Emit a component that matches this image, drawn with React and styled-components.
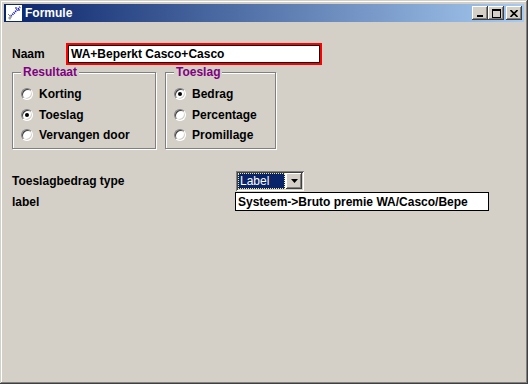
import styled, { createGlobalStyle } from "styled-components";

const Global = createGlobalStyle`
  body {
    margin: 0;
    background: #d4d0c8;
    font-family: "Liberation Sans", Arial, sans-serif;
  }
`;

const Window = styled.div`
  width: 528px;
  height: 384px;
  box-sizing: border-box;
  padding: 4px;
  background: #d4d0c8;
  box-shadow: inset -1px -1px #404040, inset 1px 1px #d4d0c8,
    inset -2px -2px #808080, inset 2px 2px #ffffff;
  display: flex;
  flex-direction: column;
`;

const TitleBar = styled.div`
  height: 18px;
  display: flex;
  align-items: center;
  padding: 0 2px;
  background: linear-gradient(to right, #0a246a, #a6caf0);
`;

const Title = styled.span`
  color: #fff;
  font-weight: bold;
  font-size: 12px;
  margin-left: 3px;
`;

const Buttons = styled.div`
  margin-left: auto;
  display: flex;
  gap: 2px;
`;

const Pair = styled.div`
  display: flex;
`;

const CapButton = styled.div`
  width: 16px;
  height: 14px;
  box-sizing: border-box;
  background: #d4d0c8;
  box-shadow: inset -1px -1px #404040, inset 1px 1px #ffffff,
    inset -2px -2px #808080;
  display: flex;
  align-items: center;
  justify-content: center;
`;

const Body = styled.div`
  padding: 21px 8px 0;
  display: flex;
  flex-direction: column;
`;

const Label = styled.span`
  font-size: 12px;
  font-weight: bold;
  color: #000;
`;

const NameRow = styled.div`
  display: flex;
  align-items: center;
  height: 22px;
`;

const NameLabel = styled(Label)`
  width: 54px;
`;

const NameInput = styled.div`
  width: 256px;
  height: 22px;
  box-sizing: border-box;
  border: 2px solid #ff0000;
  box-shadow: inset 1px 1px #000, inset -1px -1px #000;
  background: #fff;
  padding: 0 3px;
  display: flex;
  align-items: center;
  font-size: 12px;
  font-weight: bold;
`;

const Groups = styled.div`
  display: flex;
  gap: 9px;
  margin-top: 7px;
`;

const Group = styled.div`
  position: relative;
  width: ${(p) => p.$w}px;
  height: 77px;
  box-sizing: border-box;
  border: 1px solid #808080;
  box-shadow: inset 1px 1px #ffffff, 1px 1px #ffffff;
  padding: 11px 0 0 8px;
  display: flex;
  flex-direction: column;
`;

const Legend = styled.span`
  position: absolute;
  top: -8px;
  left: 8px;
  padding: 0 2px;
  background: #d4d0c8;
  color: #800080;
  font-size: 12px;
  font-weight: bold;
`;

const RadioRow = styled.div`
  height: 20.5px;
  display: flex;
  align-items: center;
  gap: 6px;
`;

const RadioDot = styled.span`
  width: 12px;
  height: 12px;
  box-sizing: border-box;
  border-radius: 50%;
  border: 1px solid;
  border-color: #808080 #ffffff #ffffff #808080;
  background: #fff;
  box-shadow: inset 1px 1px #404040, inset -1px -1px #d4d0c8;
  display: flex;
  align-items: center;
  justify-content: center;
  &::after {
    content: "";
    width: 4px;
    height: 4px;
    border-radius: 50%;
    background: ${(p) => (p.$on ? "#000" : "transparent")};
  }
`;

const Fields = styled.div`
  margin-top: 22px;
  display: grid;
  grid-template-columns: 224px auto;
  row-gap: 1px;
  align-items: center;
`;

const Combo = styled.div`
  width: 68px;
  height: 20px;
  box-sizing: border-box;
  padding: 2px;
  background: #fff;
  box-shadow: inset 1px 1px #808080, inset -1px -1px #ffffff,
    inset 2px 2px #404040, inset -2px -2px #d4d0c8;
  display: flex;
  gap: 1px;
`;

const ComboValue = styled.div`
  flex: 1;
  background: #0a246a;
  color: #fff;
  font-size: 12px;
  outline: 1px dotted #f0f080;
  outline-offset: -1px;
  padding-left: 2px;
  display: flex;
  align-items: center;
`;

const ComboButton = styled(CapButton)`
  height: 16px;
`;

const TextBox = styled.div`
  width: 254px;
  height: 19px;
  margin-left: -1px;
  box-sizing: border-box;
  border: 1px solid #000;
  background: #fff;
  padding: 0 2px;
  overflow: hidden;
  white-space: nowrap;
  font-size: 12px;
  font-weight: bold;
  display: flex;
  align-items: center;
`;

function AppIcon() {
  return (
    <svg width="16" height="16" viewBox="0 0 16 16">
      <rect x="0" y="0" width="16" height="16" fill="#fff" />
      <path d="M5 11 L14 2" stroke="#0000c0" strokeWidth="2" strokeDasharray="1 1" />
      <path d="M9 3 h2 M12 5 h2" stroke="#0000c0" strokeWidth="1" />
      <path d="M2 13 L5 10 L6 12 L4 15 Z" fill="#a0a0a0" />
      <path d="M2 9 L4 11" stroke="#808080" />
    </svg>
  );
}

function Radio({ on, children }) {
  return (
    <RadioRow>
      <RadioDot $on={on} />
      <Label>{children}</Label>
    </RadioRow>
  );
}

export default function App() {
  return (
    <>
      <Global />
      <Window>
        <TitleBar>
          <AppIcon />
          <Title>Formule</Title>
          <Buttons>
            <Pair>
              <CapButton>
                <svg width="8" height="8" viewBox="0 0 8 8">
                  <rect x="1" y="6" width="6" height="2" fill="#000" />
                </svg>
              </CapButton>
              <CapButton>
                <svg width="9" height="9" viewBox="0 0 9 9">
                  <rect x="0.5" y="0.5" width="8" height="8" fill="none" stroke="#000" />
                  <rect x="0" y="0" width="9" height="2" fill="#000" />
                </svg>
              </CapButton>
            </Pair>
            <CapButton>
              <svg width="8" height="7" viewBox="0 0 8 7">
                <path d="M0.5 0 L7.5 7 M7.5 0 L0.5 7" stroke="#000" strokeWidth="1.6" />
              </svg>
            </CapButton>
          </Buttons>
        </TitleBar>
        <Body>
          <NameRow>
            <NameLabel>Naam</NameLabel>
            <NameInput>WA+Beperkt Casco+Casco</NameInput>
          </NameRow>
          <Groups>
            <Group $w={144}>
              <Legend>Resultaat</Legend>
              <Radio>Korting</Radio>
              <Radio on>Toeslag</Radio>
              <Radio>Vervangen door</Radio>
            </Group>
            <Group $w={111}>
              <Legend>Toeslag</Legend>
              <Radio on>Bedrag</Radio>
              <Radio>Percentage</Radio>
              <Radio>Promillage</Radio>
            </Group>
          </Groups>
          <Fields>
            <Label>Toeslagbedrag type</Label>
            <Combo>
              <ComboValue>Label</ComboValue>
              <ComboButton>
                <svg width="7" height="4" viewBox="0 0 7 4">
                  <path d="M0 0 H7 L3.5 4 Z" fill="#000" />
                </svg>
              </ComboButton>
            </Combo>
            <Label>label</Label>
            <TextBox>Systeem-&gt;Bruto premie WA/Casco/Bepe</TextBox>
          </Fields>
        </Body>
      </Window>
    </>
  );
}
